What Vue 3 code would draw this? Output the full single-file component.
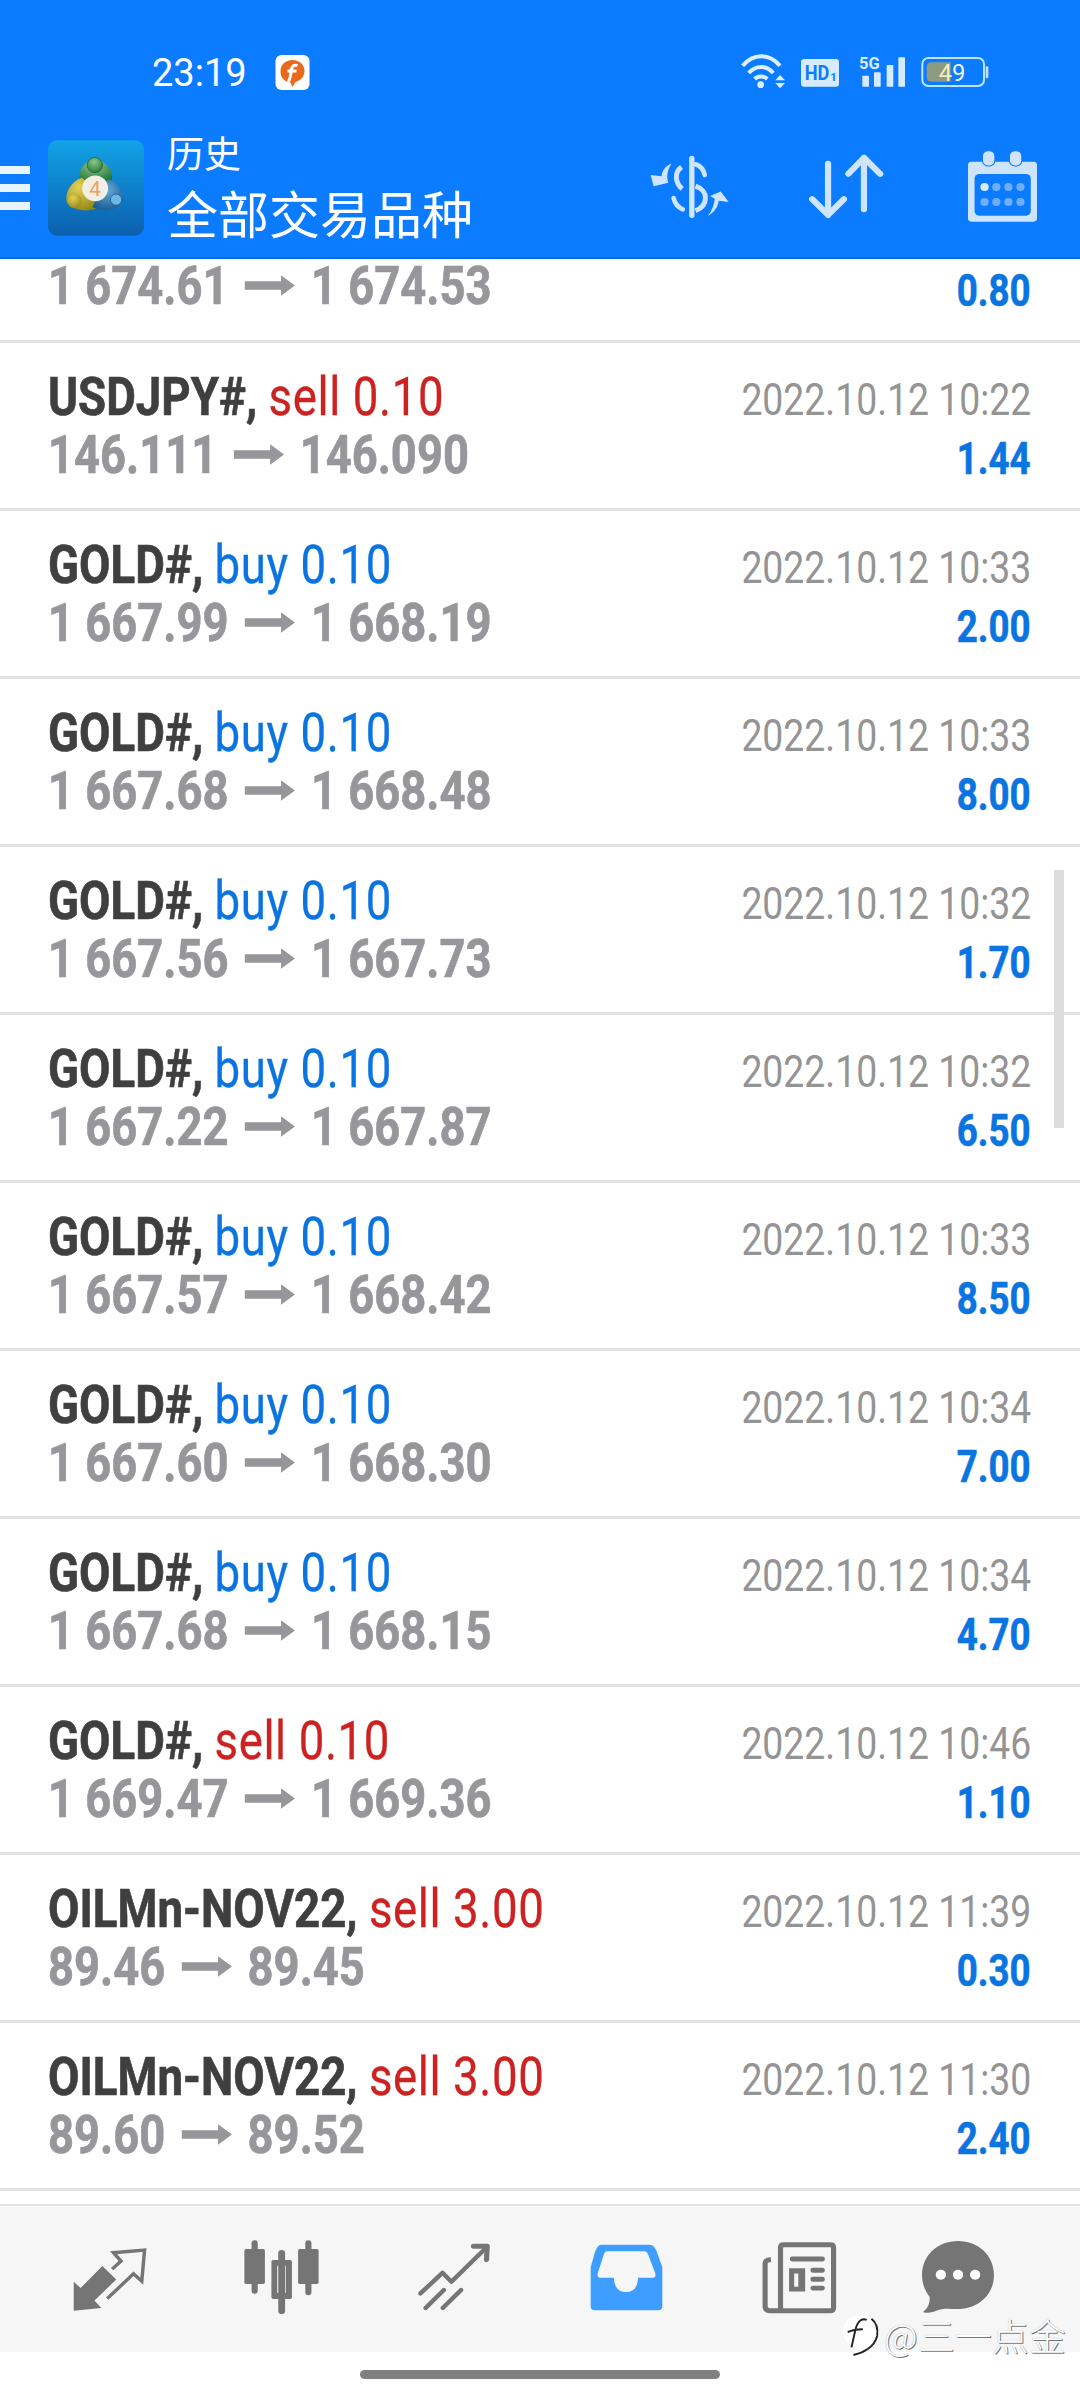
<script setup>
const rows = [
  { sym: 'USDJPY#', side: 'sell', vol: '0.10', open: '146.111', close: '146.090', time: '2022.10.12 10:22', pnl: '1.44' },
  { sym: 'GOLD#', side: 'buy', vol: '0.10', open: '1 667.99', close: '1 668.19', time: '2022.10.12 10:33', pnl: '2.00' },
  { sym: 'GOLD#', side: 'buy', vol: '0.10', open: '1 667.68', close: '1 668.48', time: '2022.10.12 10:33', pnl: '8.00' },
  { sym: 'GOLD#', side: 'buy', vol: '0.10', open: '1 667.56', close: '1 667.73', time: '2022.10.12 10:32', pnl: '1.70' },
  { sym: 'GOLD#', side: 'buy', vol: '0.10', open: '1 667.22', close: '1 667.87', time: '2022.10.12 10:32', pnl: '6.50' },
  { sym: 'GOLD#', side: 'buy', vol: '0.10', open: '1 667.57', close: '1 668.42', time: '2022.10.12 10:33', pnl: '8.50' },
  { sym: 'GOLD#', side: 'buy', vol: '0.10', open: '1 667.60', close: '1 668.30', time: '2022.10.12 10:34', pnl: '7.00' },
  { sym: 'GOLD#', side: 'buy', vol: '0.10', open: '1 667.68', close: '1 668.15', time: '2022.10.12 10:34', pnl: '4.70' },
  { sym: 'GOLD#', side: 'sell', vol: '0.10', open: '1 669.47', close: '1 669.36', time: '2022.10.12 10:46', pnl: '1.10' },
  { sym: 'OILMn-NOV22', side: 'sell', vol: '3.00', open: '89.46', close: '89.45', time: '2022.10.12 11:39', pnl: '0.30' },
  { sym: 'OILMn-NOV22', side: 'sell', vol: '3.00', open: '89.60', close: '89.52', time: '2022.10.12 11:30', pnl: '2.40' },
]
</script>

<template>
  <div class="screen">
    <header class="appbar">
      <div class="status">
        <span class="clock">23:19</span>
        <svg class="fbadge" viewBox="0 0 34 35">
          <rect width="34" height="35" rx="6" fill="#fff" />
          <path d="M17 5C9.5 5 5 10 5 16.5S9.5 27 15 27.500L17 32L20 27C26 25 29 21 29 16C29 10 24.500 5 17 5Z" fill="#ea6a1c" />
          <path d="M22 10.500C18 9.500 16.500 11.500 16 14L15 21L13 27M12 16H21" fill="none" stroke="#fff" stroke-width="3" />
        </svg>
        <svg class="sysicons" viewBox="0 0 810 165">
          <g fill="none" stroke="#dcefff" stroke-width="12">
            <path d="M38 62C70 24 118 24 150 62" />
            <path d="M56 84C78 60 108 60 130 84" />
            <path d="M74 102C84 92 102 92 112 102" />
          </g>
          <circle cx="92" cy="119" r="10" fill="#dcefff" />
          <path d="M136 106L150 90L165 106ZM136 114H165L150 130Z" fill="#dcefff" />
          <rect x="213" y="42" width="114" height="83" rx="9" fill="#d6ebff" />
          <text class="hd" x="224" y="106" textLength="74" lengthAdjust="spacingAndGlyphs">HD</text>
          <text class="hd1" x="301" y="108">1</text>
          <text class="fiveg" x="387" y="72" textLength="62" lengthAdjust="spacingAndGlyphs">5G</text>
          <g fill="#d6ebff">
            <rect x="397" y="92" width="20" height="33" rx="2" />
            <rect x="432" y="82" width="20" height="43" rx="2" />
            <rect x="470" y="60" width="20" height="65" rx="2" />
            <rect x="505" y="37" width="20" height="88" rx="2" />
          </g>
          <rect x="577" y="39" width="185" height="84" rx="18" fill="none" stroke="#bfe3ff" stroke-width="6" />
          <path d="M604 52H662V110H604Q590 110 590 96V66Q590 52 604 52Z" fill="#8c9a80" />
          <text class="batt" x="626" y="109" textLength="80" lengthAdjust="spacingAndGlyphs"><tspan fill="#f2eeb8">4</tspan>9</text>
          <rect x="767" y="64" width="8" height="36" rx="3" fill="#bfe3ff" />
        </svg>
      </div>

      <div class="toolbar">
        <div class="burger"><i></i><i></i><i></i></div>
        <svg class="logo" viewBox="24 27 289 288">
          <defs>
            <linearGradient id="lg-bg" x1="0" y1="0" x2="0" y2="1">
              <stop offset="0" stop-color="#12a3e6" />
              <stop offset="1" stop-color="#0b5fae" />
            </linearGradient>
            <radialGradient id="lg-g" cx=".45" cy=".3" r=".8">
              <stop offset="0" stop-color="#8ec888" />
              <stop offset="1" stop-color="#1c7038" />
            </radialGradient>
            <radialGradient id="lg-y" cx=".4" cy=".3" r=".8">
              <stop offset="0" stop-color="#e6d255" />
              <stop offset="1" stop-color="#8c8412" />
            </radialGradient>
            <radialGradient id="lg-b" cx=".5" cy=".35" r=".8">
              <stop offset="0" stop-color="#62a9d8" />
              <stop offset="1" stop-color="#0f4f86" />
            </radialGradient>
          </defs>
          <rect x="24" y="27" width="289" height="288" rx="28" fill="url(#lg-bg)" />
          <path d="M165 82C132 90 112 118 118 152L214 152C226 118 198 90 165 82Z" fill="url(#lg-g)" />
          <path d="M126 140C96 150 74 182 80 212C98 240 140 244 172 232L150 160Z" fill="url(#lg-y)" />
          <path d="M206 145C236 156 254 186 248 212C228 242 190 244 158 228L185 170Z" fill="url(#lg-b)" />
          <circle cx="165" cy="102" r="23" fill="url(#lg-g)" stroke="#155e2e" stroke-width="2" />
          <circle cx="104" cy="210" r="22" fill="url(#lg-y)" />
          <circle cx="229" cy="206" r="17" fill="#6cb6e6" stroke="#124f83" stroke-width="2" />
          <circle cx="166" cy="172" r="39" fill="#f3efe6" />
          <text class="four" x="166" y="195">4</text>
        </svg>
        <div class="titles">
          <div class="t1">历史</div>
          <div class="t2">全部交易品种</div>
        </div>
        <svg class="tool dollar" viewBox="25 40 250 190" preserveAspectRatio="none">
          <g fill="none" stroke="#cfe5fb">
            <path d="M157 50V222" stroke-width="16" stroke-linecap="round" />
            <path d="M196 100C192 82 180 72 168 68" stroke-width="14" stroke-linecap="round" />
            <path d="M126 76C104 92 106 124 128 142" stroke-width="15" />
            <path d="M168 134C208 146 208 192 168 208" stroke-width="15" />
            <path d="M102 170C106 186 116 198 130 204" stroke-width="14" stroke-linecap="round" />
          </g>
          <path d="M96 66C74 76 68 88 66 104L33 100L42 134L86 124C80 104 84 84 96 66Z" fill="#cfe5fb" />
          <path d="M205 224C226 212 236 196 238 178L268 182L244 150L212 164L226 172C224 190 218 208 205 224Z" fill="#cfe5fb" />
        </svg>
        <svg class="tool sort" viewBox="775 460 226 200" preserveAspectRatio="none">
          <g fill="none" stroke="#cfe5fb" stroke-width="18" stroke-linecap="round" stroke-linejoin="round">
            <path d="M836 492V645M790 598L836 645L882 598" />
            <path d="M940 628V474M895 522L940 474L987 522" />
          </g>
        </svg>
        <svg class="tool cal" viewBox="1243 448 200 216" preserveAspectRatio="none">
          <rect x="1243" y="483" width="200" height="180" rx="10" fill="#cde4fb" />
          <rect x="1262" y="520" width="163" height="125" rx="14" fill="#0b7cff" />
          <rect x="1285" y="450" width="36" height="46" rx="16" fill="#cde4fb" stroke="#0b7cff" stroke-width="3" />
          <rect x="1363" y="450" width="36" height="46" rx="16" fill="#cde4fb" stroke="#0b7cff" stroke-width="3" />
          <circle cx="1291" cy="559" r="12" fill="#dbe9fb" />
          <g fill="#6eaefc">
            <circle cx="1325" cy="559" r="12" />
            <circle cx="1360" cy="559" r="12" />
            <circle cx="1395" cy="559" r="12" />
            <circle cx="1291" cy="604" r="12" />
            <circle cx="1325" cy="604" r="12" />
            <circle cx="1360" cy="604" r="12" />
            <circle cx="1395" cy="604" r="12" />
          </g>
        </svg>
      </div>
    </header>

    <main class="list">
      <div class="row partial">
        <div class="left">
          <div class="line"><span class="squeeze-l prices">1 674.61<svg class="arrow" viewBox="0 0 58 24"><path d="M0 8H42V2L58 12L42 22V16H0Z" /></svg>1 674.53</span></div>
        </div>
        <div class="right">
          <div class="pnl"><span class="squeeze-p">0.80</span></div>
        </div>
      </div>
      <div v-for="(r, i) in rows" :key="i" class="row">
        <div class="left">
          <div class="line">
            <span class="squeeze"><b class="sym">{{ r.sym }},</b> <span :class="r.side">{{ r.side }} {{ r.vol }}</span></span>
          </div>
          <div class="line">
            <span class="squeeze-l prices">{{ r.open }}<svg class="arrow" viewBox="0 0 58 24"><path d="M0 8H42V2L58 12L42 22V16H0Z" /></svg>{{ r.close }}</span>
          </div>
        </div>
        <div class="right">
          <div class="time"><span class="squeeze-r">{{ r.time }}</span></div>
          <div class="pnl"><span class="squeeze-p">{{ r.pnl }}</span></div>
        </div>
      </div>
      <div class="row tail"></div>
      <div class="scrollbar"></div>
    </main>

    <nav class="tabs">
      <svg class="tab t-arrows" viewBox="210 180 220 215" preserveAspectRatio="none">
        <path d="M215 302L235 320L298 255L338 295L275 358L295 380L215 388Z" fill="#757575" />
        <path d="M326 264L352 240L330 215L420 207L412 300L388 278L312 352" fill="none" stroke="#757575" stroke-width="10" />
      </svg>
      <svg class="tab t-candles" viewBox="705 180 225 228" preserveAspectRatio="none">
        <g fill="#757575">
          <rect x="730" y="184" width="18" height="160" rx="9" />
          <rect x="709" y="210" width="60" height="105" rx="5" />
          <rect x="808" y="213" width="20" height="192" rx="10" />
          <rect x="887" y="184" width="18" height="165" rx="9" />
          <rect x="866" y="210" width="60" height="105" rx="5" />
          <path fill-rule="evenodd" d="M793 243H843Q848 243 848 248V355Q848 360 843 360H793Q788 360 788 355V248Q788 243 793 243ZM805 260V342H830V260Z" />
        </g>
      </svg>
      <svg class="tab t-trend" viewBox="1210 188 215 205" preserveAspectRatio="none">
        <g fill="none" stroke="#757575" stroke-width="13" stroke-linecap="round">
          <path d="M1220 340L1284 278L1310 305L1408 205" stroke-linejoin="round" />
          <path d="M1374 198L1414 198L1412 238" stroke-linejoin="round" stroke-width="15" />
          <path d="M1235 384L1288 330M1285 384L1338 330" />
        </g>
      </svg>
      <svg class="tab t-inbox" viewBox="146 190 211 202" preserveAspectRatio="none">
        <path d="M178 192H318Q330 192 338 210L355 260V378Q355 390 343 390H160Q148 390 148 378V260L160 215Q168 192 178 192Z" fill="#3d9eff" />
        <path d="M195 212H303Q310 212 314 222L335 280Q337 292 325 292H285Q283 335 250 335Q217 335 215 292H178Q166 292 168 280L186 222Q189 212 195 212Z" fill="#f6f6f6" />
      </svg>
      <svg class="tab t-news" viewBox="643 180 222 220" preserveAspectRatio="none">
        <g fill="none" stroke="#757575" stroke-width="15">
          <path d="M700 384V200Q700 191 709 191H846Q855 191 855 200V381Q855 390 846 390H668Q655 390 655 377V248Q655 238 672 236" />
        </g>
        <g fill="none" stroke="#757575" stroke-width="15" stroke-linecap="round">
          <path d="M735 234H822M795 268H822M795 295H822M795 322H822" />
        </g>
        <path fill-rule="evenodd" d="M725 262H772V332H725ZM740 278V318H752V278Z" fill="#757575" />
      </svg>
      <svg class="tab t-chat" viewBox="1105 180 216 222" preserveAspectRatio="none">
        <path d="M1213 183C1272 183 1318 226 1318 285C1318 344 1272 387 1213 387C1190 387 1170 383 1150 392C1135 398 1120 400 1110 397C1125 385 1132 368 1130 350C1116 332 1108 310 1108 285C1108 226 1154 183 1213 183Z" fill="#757575" />
        <g fill="#fff">
          <circle cx="1163" cy="284" r="15" />
          <circle cx="1213" cy="284" r="15" />
          <circle cx="1263" cy="284" r="15" />
        </g>
      </svg>
    </nav>

    <div class="homebar"><span></span></div>

    <div class="watermark">
      <svg class="wm-logo" viewBox="0 0 40 46">
        <path d="M20 2C8 2 1 10 1 19C1 28 6 33 14 34L12 45C22 42 34 36 38 24C41 12 32 2 20 2Z" fill="#fff" />
        <path d="M12 44C22 42 34 36 37 24C38 17 36 10 31 6M26 7C20 5 16 9 14 18L10 36M6 20C12 17 18 17 22 17" fill="none" stroke="#222" stroke-width="2" />
      </svg>
      <span class="wm-text">@三一点金</span>
    </div>
  </div>
</template>

<style scoped>
.screen {
  position: relative;
  width: 1080px;
  height: 2400px;
  background: #fff;
  overflow: hidden;
  font-family: Roboto, "Liberation Sans", sans-serif;
}
.appbar {
  position: relative;
  z-index: 1;
  height: 259px;
  box-sizing: border-box;
  background: #0b7cff;
  border-bottom: 2px solid #0a6fdc;
}
.status {
  display: flex;
  align-items: center;
  height: 147px;
  box-sizing: border-box;
  padding: 45px 0 47px 152px;
  margin-bottom: -17px;
}
.clock {
  color: #fff;
  font-size: 38px;
  width: 123px;
}
.fbadge {
  width: 35px;
  height: 35px;
}
.sysicons {
  width: 270px;
  height: 55px;
  margin-left: 420px;
}
.hd {
  font: 700 62px Roboto, sans-serif;
  fill: #0b7cff;
}
.hd1 {
  font: 700 34px Roboto, sans-serif;
  fill: #0b7cff;
}
.fiveg {
  font: 700 48px Roboto, sans-serif;
  fill: #d6ebff;
}
.batt {
  font: 400 74px Roboto, sans-serif;
  fill: #eef3df;
}
.toolbar {
  display: flex;
  align-items: center;
  height: 115px;
}
.burger {
  display: flex;
  flex-direction: column;
  gap: 10px;
  width: 30px;
}
.burger i {
  display: block;
  height: 8px;
  background: #e8f4ff;
}
.logo {
  width: 96px;
  height: 96px;
  margin-left: 18px;
}
.four {
  font: 400 62px Roboto, sans-serif;
  fill: #eda24f;
  text-anchor: middle;
}
.titles {
  margin-left: 23px;
  margin-top: -1px;
  width: 303px;
  color: #fff;
  font-family: "Noto Sans CJK SC", sans-serif;
  font-weight: 400;
}
.t1 {
  font-size: 37px;
  line-height: 50px;
}
.t2 {
  font-size: 51px;
  line-height: 70px;
  white-space: nowrap;
}
.tool {
  flex: none;
  margin-top: -3px;
}
.dollar {
  width: 83px;
  height: 63px;
  margin-left: 178px;
}
.sort {
  width: 78px;
  height: 67px;
  margin-left: 76px;
}
.cal {
  width: 69px;
  height: 72px;
  margin-left: 83px;
}
.list {
  position: relative;
  height: 1948px;
}
.row {
  display: flex;
  justify-content: space-between;
  box-sizing: border-box;
  height: 168px;
  padding: 25px 49px 0 48px;
  border-bottom: 3px solid #e3e3e3;
}
.row.partial {
  height: 84px;
  padding-top: 0;
}
.row.partial .left {
  margin-top: -2px;
}
.row.tail {
  height: 15px;
  padding: 0;
  border-bottom-width: 2px;
}
.line {
  height: 58px;
  font-size: 54px;
  line-height: 58px;
  white-space: nowrap;
}
.squeeze {
  display: inline-block;
  transform: scaleX(.845);
  transform-origin: left center;
}
.squeeze-l {
  display: inline-block;
  transform: scaleX(.84);
  transform-origin: left center;
}
.squeeze-r {
  display: inline-block;
  transform: scaleX(.83);
  transform-origin: right center;
  white-space: nowrap;
}
.squeeze-p {
  display: inline-block;
  transform: scaleX(.815);
  transform-origin: right center;
  white-space: nowrap;
}
.sym {
  font-weight: 700;
  color: #3f3f3f;
  -webkit-text-stroke: .7px #3f3f3f;
}
.buy {
  color: #0a74e0;
  letter-spacing: .7px;
  -webkit-text-stroke: .3px #0a74e0;
}
.sell {
  color: #cc2222;
  letter-spacing: .7px;
  -webkit-text-stroke: .3px #cc2222;
}
.prices {
  font-weight: 700;
  color: #97979b;
  -webkit-text-stroke: .7px #97979b;
}
.arrow {
  width: 60px;
  height: 25px;
  margin: 0 19px;
  vertical-align: 6px;
  fill: #97979b;
  stroke: none;
}
.right {
  text-align: right;
  padding-top: 3px;
}
.partial .right {
  padding-top: 2px;
}
.time {
  font-size: 45px;
  line-height: 58px;
  color: #949494;
}
.pnl {
  font-size: 45px;
  line-height: 60px;
  font-weight: 700;
  color: #0a74e0;
  -webkit-text-stroke: .6px #0a74e0;
}
.scrollbar {
  position: absolute;
  top: 611px;
  right: 16px;
  width: 10px;
  height: 258px;
  background: #ddd;
}
.tabs {
  display: grid;
  grid-template-columns: 172px 170px 175px 170px 176px 142px;
  justify-items: center;
  align-items: center;
  height: 145px;
  padding: 0 0 5px 24px;
  box-sizing: border-box;
  background: #f6f6f6;
}
.t-arrows { width: 76px; height: 72px; }
.t-candles { width: 77px; height: 76px; }
.t-trend { width: 74px; height: 68px; }
.t-inbox { width: 73px; height: 67px; }
.t-news { width: 76px; height: 73px; }
.t-chat { width: 74px; height: 74px; }
.homebar {
  display: flex;
  justify-content: center;
  padding-top: 18px;
}
.homebar span {
  display: block;
  width: 360px;
  height: 9px;
  border-radius: 5px;
  background: #808080;
}
.watermark {
  position: absolute;
  left: 842px;
  top: 2312px;
  display: flex;
  align-items: center;
  gap: 4px;
}
.wm-logo {
  width: 38px;
  height: 46px;
}
.wm-text {
  font-family: "Noto Sans CJK SC", sans-serif;
  font-weight: 300;
  font-size: 37px;
  line-height: 42px;
  color: #fff;
  text-shadow: 1px 1px 0 #777, 0 0 1px #999;
}
</style>

<style>
html, body {
  margin: 0;
  background: #fff;
}
</style>
